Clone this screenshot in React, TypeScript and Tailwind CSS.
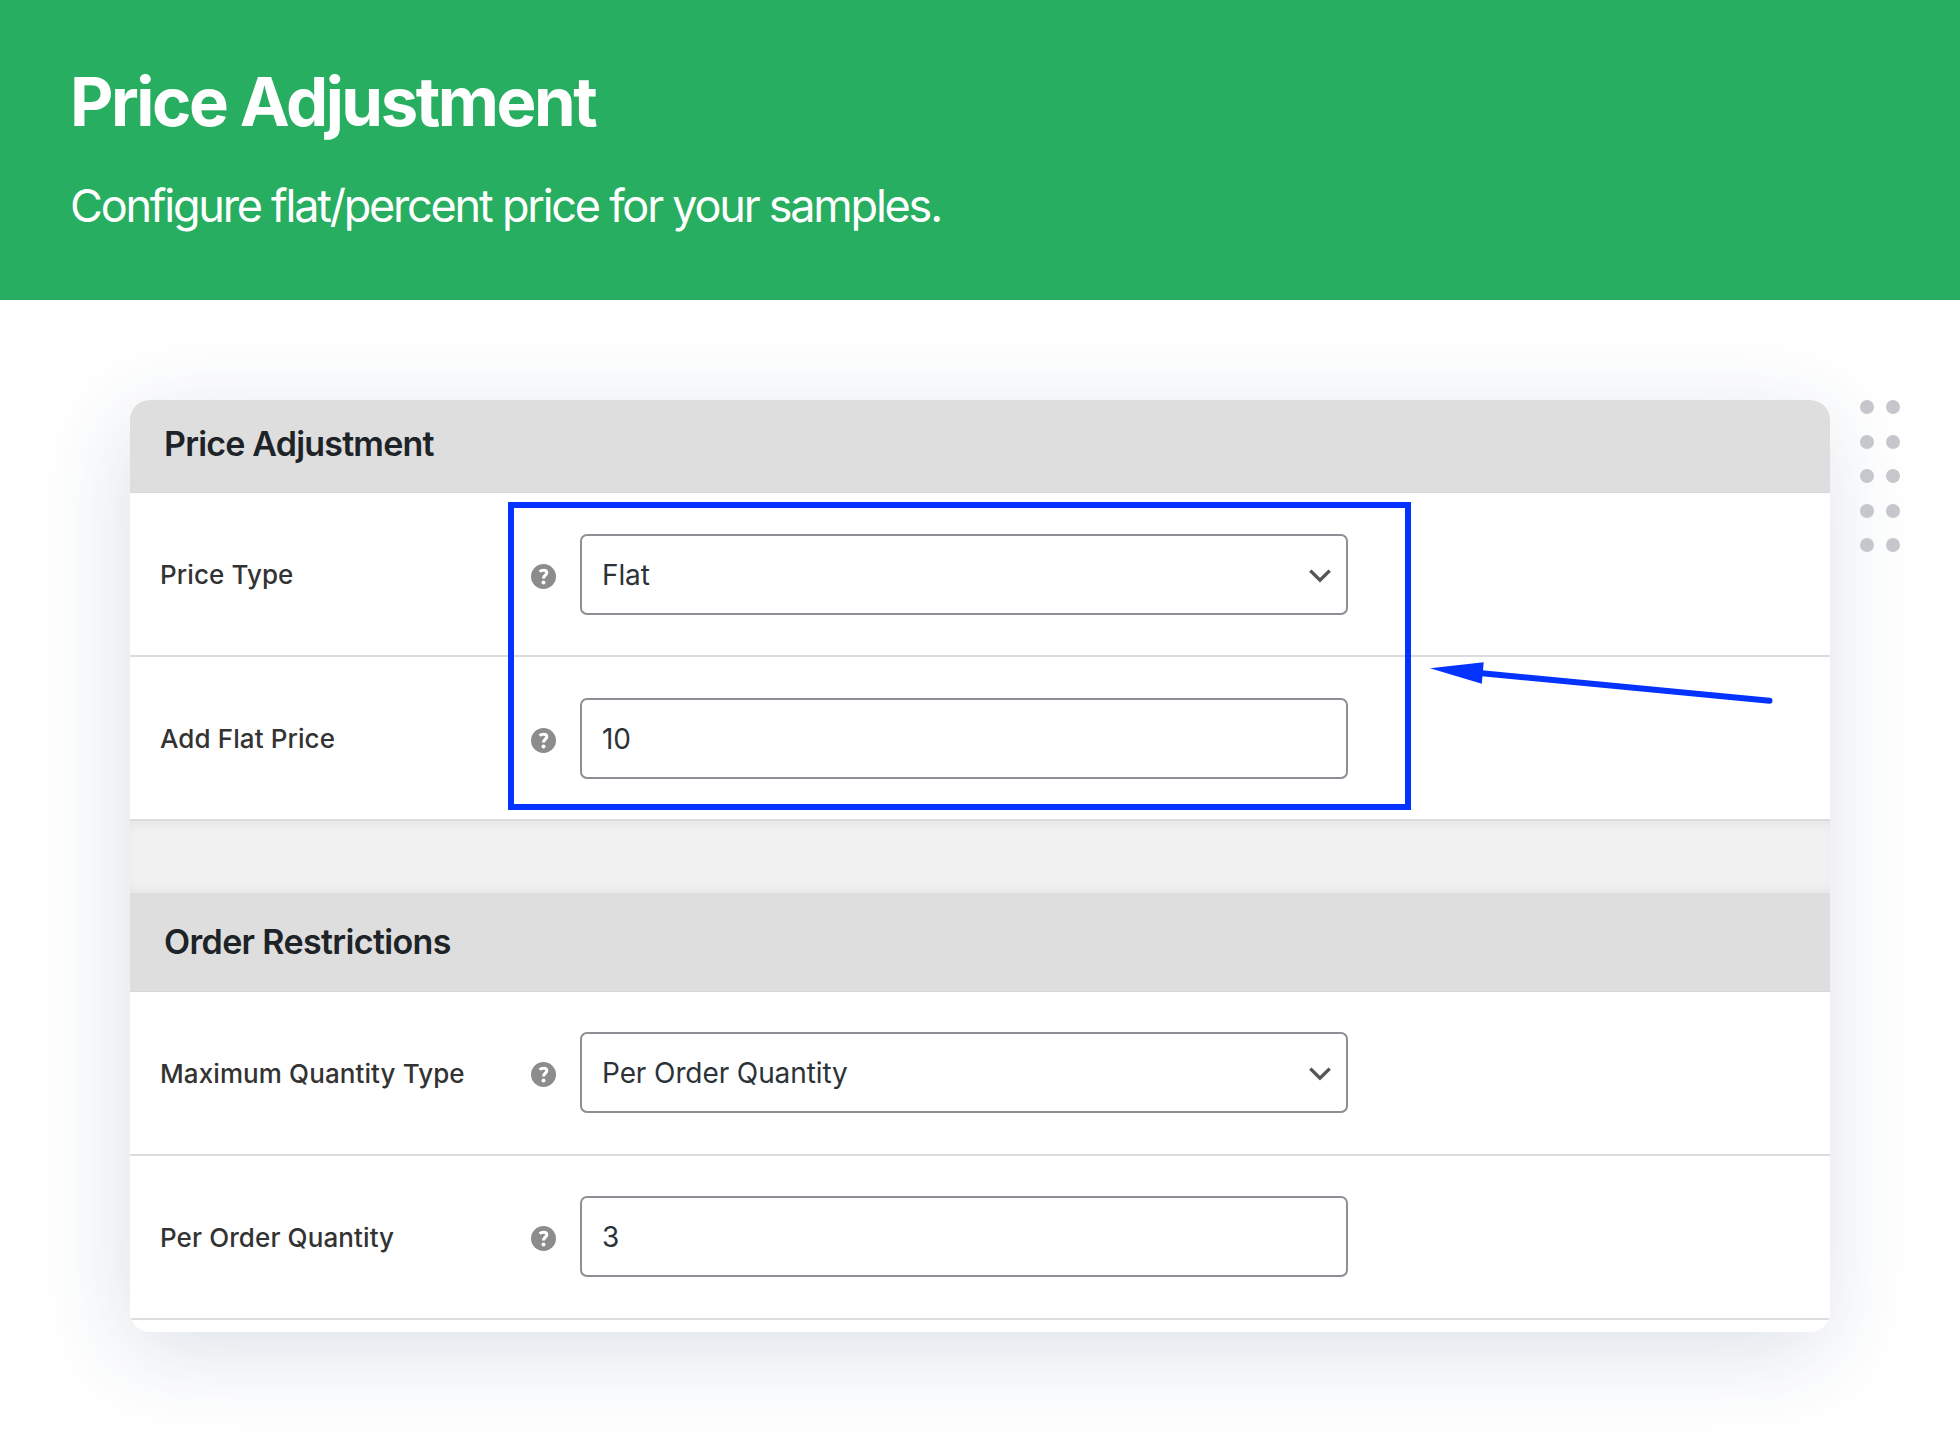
import { ReactNode } from "react";

interface FieldRowProps {
    label: string,
    value: string,
    isSelect?: boolean;
}

interface SectionTitleProps {
    children: ReactNode,
    className: string;
}

const HelpIcon = () => (
    <span className="mt-[4px] flex h-[25px] w-[25px] items-center justify-center rounded-full bg-[#8c8c8c]">
      <svg width="25" height="25" viewBox="0 0 25 25" fill="none">
        <path
          d="M8.6 7.6C9.8 6.6 11.1 6.2 12.6 6.2c2 0 3.2 1 3.2 2.6 0 2.5-3.3 2.5-3.3 5.6"
          stroke="#fff"
          strokeWidth="3.1"
        />
        <circle cx="12.5" cy="18.6" r="2" fill="#fff" />
      </svg>
    </span>
);

const Chevron = () => (
    <svg className="mt-[3px]" width="24" height="16" viewBox="0 0 24 16" fill="none">
      <path d="M2.3 2.6 12 12.2l9.7-9.6" stroke="#555555" strokeWidth="3.4" />
    </svg>
);

const SectionTitle = ({children, className}: SectionTitleProps) => (
    <h2 className={`flex items-center border-b border-[#d6d6d6] bg-[#dedede] pl-[34px] text-[34px] leading-none font-semibold text-[#1d2327] ${className}`}>
      {children}
    </h2>
);

const FieldRow = ({label, value, isSelect}: FieldRowProps) => (
    <div className="flex h-[164px] items-center border-b-2 border-[#dcdcde] bg-white">
      <div className="w-[401px] pt-[2px] pl-[30px] text-[26px] leading-none font-medium tracking-[0.1px] whitespace-nowrap text-[#333333]">
        {label}
      </div>
      <HelpIcon />
      <div className="ml-[24px] flex h-[81px] w-[768px] items-center justify-between rounded-[7px] border-2 border-[#8c8f94] pr-[14px] pl-[20px] text-[28px] leading-none tracking-[-0.1px] text-[#2c3338]">
        <span className="pt-[1px]">{value}</span>
        {isSelect && <Chevron />}
      </div>
    </div>
);

const DotGrid = () => (
    <div className="mt-[100px] ml-[30px] grid h-[152px] w-[40px] grid-cols-2 content-between justify-between">
      {Array.from({ length: 10 }).map((_, index) => (
        <span
          key={index}
          className={index % 2 === 0 ? "size-[14px] rounded-full bg-[#c5c7cd]" : "size-[14px] justify-self-end rounded-full bg-[#c5c7cd]"}
        />
      ))}
    </div>
);

export default function App() {
    return (
        <div className="relative h-[1432px] w-[1960px] overflow-hidden bg-white font-['Inter','Liberation_Sans',sans-serif]">
          <header className="h-[300px] bg-[#27ae60] pt-[61px] pl-[70px] text-white">
            <h1 className="text-[67px] leading-[82px] font-bold tracking-[-2.45px]">Price Adjustment</h1>
            <p className="mt-[35px] text-[45px] leading-[56px] tracking-[-2.22px]">
              Configure flat/percent price for your samples.
            </p>
          </header>

          <main className="flex items-start pl-[130px]">
            <div className="mt-[100px] h-[932px] w-[1700px] overflow-hidden rounded-[20px] bg-white shadow-[-5px_20px_90px_rgba(40,70,110,0.16)]">
              <section>
                <SectionTitle className="h-[93px] pb-[4px] tracking-[-0.8px]">Price Adjustment</SectionTitle>
                <FieldRow label="Price Type" value="Flat" isSelect />
                <FieldRow label="Add Flat Price" value="10" />
              </section>

              <div className="h-[71.5px] bg-[#f1f1f1] shadow-[inset_0_10px_14px_-8px_rgba(0,0,0,0.06),inset_0_-10px_14px_-8px_rgba(0,0,0,0.06)]" />

              <section>
                <SectionTitle className="h-[99px] pt-[1px] tracking-[-0.65px]">Order Restrictions</SectionTitle>
                <FieldRow label="Maximum Quantity Type" value="Per Order Quantity" isSelect />
                <FieldRow label="Per Order Quantity" value="3" />
              </section>
            </div>
            <DotGrid />
          </main>

          {/* callout over the price fields */}
          <div className="absolute top-[502px] left-[508px] h-[308px] w-[903px] border-[6px] border-[#0433ff]" />
          <svg className="absolute top-[650px] left-[1420px]" width="370" height="70" viewBox="0 0 370 70">
            <path d="M10 18.2 63.7 12.2 61.8 33.8Z" fill="#0433ff" />
            <path d="M62 23.2 349.5 50.8" stroke="#0433ff" strokeWidth="6" strokeLinecap="round" />
          </svg>
        </div>
      );
}
